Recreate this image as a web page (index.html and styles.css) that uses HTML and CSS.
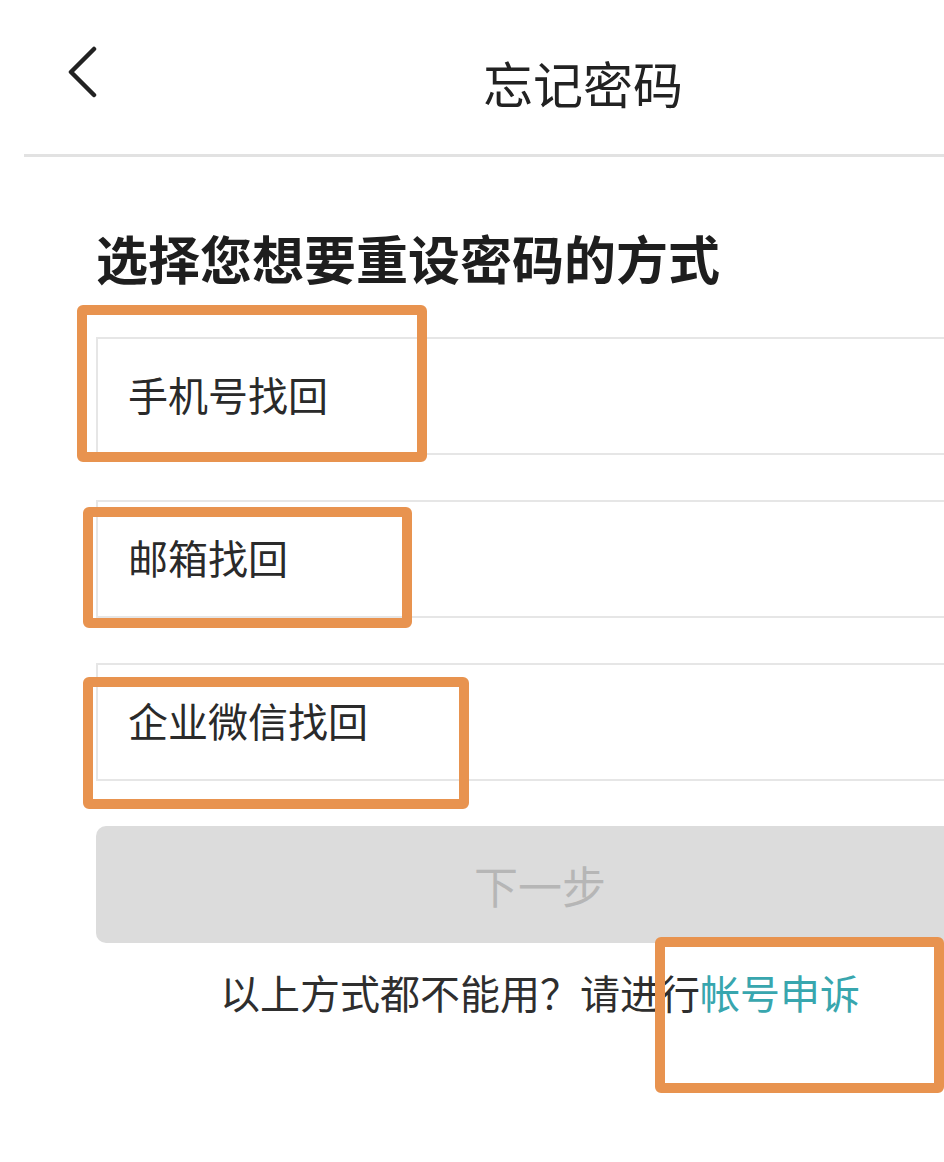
FILE: index.html
```html
<!DOCTYPE html>
<html lang="zh-CN">
<head>
  <meta charset="UTF-8" />
  <title>忘记密码</title>
  <link rel="stylesheet" href="styles.css">
</head>
<body>
  <div class="screen">
    <header class="topbar">
      <a class="back" href="#" aria-label="返回">
        <svg width="32" height="52" viewBox="0 0 32 52">
          <path d="M28 3 L5 26 L28 49" fill="none" stroke="#222" stroke-width="4.5" stroke-linecap="round" stroke-linejoin="round" />
        </svg>
      </a>
      <h1 class="title">忘记密码</h1>
      <span></span>
    </header>

    <main class="content">
      <h2 class="heading">选择您想要重设密码的方式</h2>

      <ul class="options">
        <li class="option">手机号找回</li>
        <li class="option">邮箱找回</li>
        <li class="option">企业微信找回</li>
      </ul>

      <button class="next" disabled>下一步</button>

      <p class="appeal">以上方式都不能用？请进行<a href="#">帐号申诉</a></p>
    </main>

    <!-- annotation marks drawn over the screenshot -->
    <div class="mark mark-phone"></div>
    <div class="mark mark-mail"></div>
    <div class="mark mark-wework"></div>
    <div class="mark mark-appeal"></div>
  </div>
</body>
</html>
```

FILE: styles.css
```css
html, body {
  margin: 0;
  padding: 0;
  background: #fff;
  overflow: hidden;
}

body {
  font-family: "Noto Sans CJK SC", "Noto Sans", sans-serif;
  color: #222;
}

.screen {
  position: relative;
  width: 1080px;
  height: 1162px;
}

.topbar {
  display: grid;
  grid-template-columns: 1fr auto 1fr;
  align-items: center;
  margin-left: 24px;
  width: 1118px;
  height: 154px;
  border-bottom: 3px solid #e2e2e2;
}

.back {
  display: flex;
  margin-left: 42px;
  margin-top: -10px;
}

.title {
  margin: 10px 0 0;
  font-size: 50px;
  font-weight: 400;
  line-height: 1;
  color: #222;
}

.content {
  padding: 0 96px;
}

.heading {
  margin: 75px 0 0;
  font-size: 52px;
  font-weight: 700;
  line-height: 1;
  color: #1e1e1e;
}

.options {
  list-style: none;
  margin: 53px 0 0;
  padding: 0;
  display: flex;
  flex-direction: column;
  gap: 45px;
}

.option {
  display: flex;
  align-items: center;
  box-sizing: border-box;
  height: 118px;
  padding: 0 0 4px 30px;
  border: 2px solid #e6e6e6;
  border-right: none;
  font-size: 40px;
  color: #2a2a2a;
}

.next {
  display: block;
  margin-top: 45px;
  width: 888px;
  height: 117px;
  border: none;
  border-radius: 10px;
  background: #dcdcdc;
  font-family: inherit;
  font-size: 44px;
  color: #b6b6b6;
}

.appeal {
  margin: 29px 0 0;
  text-align: center;
  font-size: 40px;
  line-height: 1;
  color: #2e2e2e;
}

.appeal a {
  color: #38a6ae;
  text-decoration: none;
}

.mark {
  position: absolute;
  box-sizing: border-box;
  border: 10px solid #e8934f;
  border-radius: 6px;
}

.mark-phone {
  left: 77px;
  top: 305px;
  width: 350px;
  height: 157px;
}

.mark-mail {
  left: 83px;
  top: 507px;
  width: 329px;
  height: 121px;
}

.mark-wework {
  left: 83px;
  top: 677px;
  width: 386px;
  height: 132px;
}

.mark-appeal {
  left: 655px;
  top: 937px;
  width: 289px;
  height: 156px;
}
```
